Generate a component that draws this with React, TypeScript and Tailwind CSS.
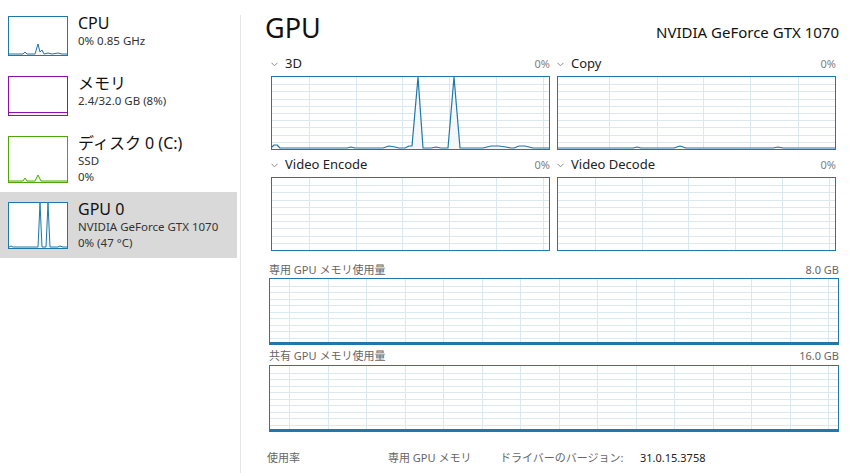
import React from "react";

const FONT = {
  fontFamily: '"Noto Sans", "Noto Sans CJK JP", sans-serif',
};

type Pt = [number, number];

const BLUE = "#1f78a8";

function Graph({
  w,
  h,
  colOffsets,
  rows,
  points,
  stroke = BLUE,
  grid = "#dbe8f0",
  fill = "#f3f7fa",
  thickBottom = false,
}: {
  w: number;
  h: number;
  colOffsets: number[];
  rows: number;
  points?: Pt[];
  stroke?: string;
  grid?: string;
  fill?: string;
  thickBottom?: boolean;
}) {
  const rowH = (h - 2) / rows;
  const ptsStr = points ? points.map((p) => p.join(",")).join(" ") : "";
  const areaStr = points
    ? `${points[0][0]},${h - 1} ` + ptsStr + ` ${points[points.length - 1][0]},${h - 1}`
    : "";
  return (
    <svg width={w} height={h} className="block">
      <rect x={0} y={0} width={w} height={h} fill="#ffffff" />
      {Array.from({ length: rows - 1 }).map((_, i) => (
        <line
          key={"h" + i}
          x1={1}
          x2={w - 1}
          y1={Math.round(1 + rowH * (i + 1)) + 0.5}
          y2={Math.round(1 + rowH * (i + 1)) + 0.5}
          stroke={grid}
          strokeWidth={1}
        />
      ))}
      {colOffsets.map((x, i) => (
        <line
          key={"v" + i}
          x1={x + 0.5}
          x2={x + 0.5}
          y1={1}
          y2={h - 1}
          stroke={grid}
          strokeWidth={1}
        />
      ))}
      {points && <polygon points={areaStr} fill={fill} />}
      {points && (
        <polyline points={ptsStr} fill="none" stroke={stroke} strokeWidth={1.2} strokeLinejoin="round" />
      )}
      {thickBottom && <line x1={0} x2={w} y1={h - 2} y2={h - 2} stroke={stroke} strokeWidth={2} />}
      <rect x={0.5} y={0.5} width={w - 1} height={h - 1} fill="none" stroke={stroke} strokeWidth={1} />
    </svg>
  );
}

function Thumb({
  w,
  h,
  color,
  fill,
  points,
  band,
}: {
  w: number;
  h: number;
  color: string;
  fill: string;
  points?: Pt[];
  band?: number;
}) {
  const ptsStr = points ? points.map((p) => p.join(",")).join(" ") : "";
  const areaStr = points
    ? `${points[0][0]},${h - 1} ` + ptsStr + ` ${points[points.length - 1][0]},${h - 1}`
    : "";
  return (
    <svg width={w} height={h} className="block shrink-0">
      <rect x={0} y={0} width={w} height={h} fill="#ffffff" />
      {band && <rect x={1} y={h - 1 - band} width={w - 2} height={band} fill={fill} />}
      {band && <line x1={1} x2={w - 1} y1={h - 1 - band + 0.5} y2={h - 1 - band + 0.5} stroke={color} strokeWidth={1} />}
      {points && <polygon points={areaStr} fill={fill} />}
      {points && <polyline points={ptsStr} fill="none" stroke={color} strokeWidth={1} />}
      <rect x={0.5} y={0.5} width={w - 1} height={h - 1} fill="none" stroke={color} strokeWidth={1} />
    </svg>
  );
}

function Chevron() {
  return (
    <svg width="7" height="5" viewBox="0 0 7 5" className="mr-[7px] mt-[1px]">
      <polyline points="0.5,0.8 3.5,3.8 6.5,0.8" fill="none" stroke="#8a8a8a" strokeWidth="1" />
    </svg>
  );
}

const cols47 = [38, 85, 131, 178, 225, 272];
const colsMem = [20, 59, 97, 136, 174, 213, 251, 290, 328, 367, 405, 444, 482, 521, 559];

const p3d: Pt[] = [
  [1, 71], [3, 69], [6, 69], [9, 72], [76, 72], [80, 71], [84, 72], [112, 72], [118, 70],
  [124, 71], [128, 72], [134, 72], [138, 70], [141, 70], [147, 1], [152, 72], [160, 72],
  [165, 71], [170, 72], [177, 72], [183, 1], [189, 72], [212, 72], [220, 70], [228, 70],
  [235, 71], [240, 72], [243, 72], [248, 70], [254, 70], [262, 72], [278, 72],
];

const pCopy: Pt[] = [
  [1, 72], [76, 72], [80, 71], [84, 72], [117, 72], [123, 70], [129, 72], [216, 72],
  [221, 71], [226, 72], [278, 72],
];

const pCpu: Pt[] = [
  [1, 38], [15, 38], [17, 36], [19, 38], [27, 38], [30, 28], [32, 36], [34, 34], [36, 38],
  [40, 37], [44, 38], [50, 37], [54, 38], [59, 38],
];

const pDisk: Pt[] = [
  [1, 45], [15, 45], [17, 42], [19, 45], [27, 45], [30, 39], [33, 45], [59, 45],
];

const pGpu: Pt[] = [
  [1, 45], [3, 44], [5, 45], [30, 45], [32, 1], [34, 45], [38, 45], [40, 1], [42, 45],
  [50, 45], [52, 44], [55, 45], [59, 45],
];

function SideItem({
  thumb,
  title,
  lines,
  selected,
  h,
}: {
  thumb: React.ReactNode;
  title: string;
  lines: string[];
  selected?: boolean;
  h: string;
}) {
  return (
    <div className={`flex pl-[8px] pt-[10px] ${h} ${selected ? "bg-[#d9d9d9]" : ""}`}>
      {thumb}
      <div className="ml-[10px] flex flex-col">
        <div className="text-[16px] leading-[18px] text-[#111] mt-[-2px]">{title}</div>
        {lines.map((l, i) => (
          <div key={i} className="text-[11.5px] leading-[15px] text-[#333] mt-[1px]">
            {l}
          </div>
        ))}
      </div>
    </div>
  );
}

export default function App() {
  return (
    <div className="w-[852px] h-[473px] flex bg-white overflow-hidden" style={FONT}>
      {/* sidebar */}
      <div className="w-[240px] shrink-0 flex flex-col pt-[6px] pr-[3px]">
        <SideItem
          h="h-[60px]"
          thumb={<Thumb w={60} h={40} color={BLUE} fill="#f1f6fa" points={pCpu} />}
          title="CPU"
          lines={["0%  0.85 GHz"]}
        />
        <SideItem
          h="h-[60px]"
          thumb={<Thumb w={60} h={40} color="#8b12ae" fill="#f4f2f4" band={3} />}
          title="メモリ"
          lines={["2.4/32.0 GB (8%)"]}
        />
        <SideItem
          h="h-[66px]"
          thumb={<Thumb w={60} h={47} color="#4da60c" fill="#eff7e8" points={pDisk} />}
          title="ディスク 0 (C:)"
          lines={["SSD", "0%"]}
        />
        <SideItem
          h="h-[66px]"
          selected
          thumb={<Thumb w={60} h={47} color={BLUE} fill="#f1f6fa" points={pGpu} />}
          title="GPU 0"
          lines={["NVIDIA GeForce GTX 1070", "0%  (47 °C)"]}
        />
      </div>
      <div className="w-px bg-[#e6e6e6] mt-[15px] shrink-0" />

      {/* main */}
      <div className="flex-1 flex flex-col pl-[24px] pr-[14px] pt-[12px]">
        <div className="flex items-baseline justify-between h-[32px]">
          <div className="text-[27px] leading-[32px] text-[#111]">GPU</div>
          <div className="text-[15px] text-[#111]">NVIDIA GeForce GTX 1070</div>
        </div>

        <div className="ml-[6px] mt-[10px] grid grid-cols-[279px_279px] gap-x-[7px]">
          <div>
            <div className="h-[20px] flex items-center justify-between">
              <div className="flex items-center text-[13px] text-[#222]">
                <Chevron />
                3D
              </div>
              <div className="text-[11px] text-[#808080]">0%</div>
            </div>
            <div className="mt-[2px]">
              <Graph w={279} h={74} colOffsets={cols47} rows={10} points={p3d} />
            </div>
          </div>
          <div>
            <div className="h-[20px] flex items-center justify-between">
              <div className="flex items-center text-[13px] text-[#222]">
                <Chevron />
                Copy
              </div>
              <div className="text-[11px] text-[#808080]">0%</div>
            </div>
            <div className="mt-[2px]">
              <Graph w={279} h={74} colOffsets={[52, 100, 146, 193, 241]} rows={10} points={pCopy} />
            </div>
          </div>
          <div className="mt-[5px]">
            <div className="h-[20px] flex items-center justify-between">
              <div className="flex items-center text-[13px] text-[#222]">
                <Chevron />
                Video Encode
              </div>
              <div className="text-[11px] text-[#808080]">0%</div>
            </div>
            <div className="mt-[2px]">
              <Graph w={279} h={74} colOffsets={cols47} rows={10} />
            </div>
          </div>
          <div className="mt-[5px]">
            <div className="h-[20px] flex items-center justify-between">
              <div className="flex items-center text-[13px] text-[#222]">
                <Chevron />
                Video Decode
              </div>
              <div className="text-[11px] text-[#808080]">0%</div>
            </div>
            <div className="mt-[2px]">
              <Graph w={279} h={74} colOffsets={cols47} rows={10} />
            </div>
          </div>
        </div>

        <div className="ml-[4px] mt-[12px] w-[570px]">
          <div className="h-[14px] flex items-center justify-between text-[11px] text-[#666]">
            <span>専用 GPU メモリ使用量</span>
            <span>8.0 GB</span>
          </div>
          <div className="mt-[1px]">
            <Graph w={570} h={67} colOffsets={colsMem} rows={10} thickBottom />
          </div>
          <div className="mt-[4px] h-[14px] flex items-center justify-between text-[11px] text-[#666]">
            <span>共有 GPU メモリ使用量</span>
            <span>16.0 GB</span>
          </div>
          <div className="mt-[2px]">
            <Graph w={570} h={67} colOffsets={colsMem} rows={10} thickBottom />
          </div>
        </div>

        <div className="mt-[19px] ml-[2px] flex items-center h-[14px] text-[11px] text-[#666]">
          <span className="w-[121px]">使用率</span>
          <span className="w-[112px]">専用 GPU メモリ</span>
          <span className="w-[140px]">ドライバーのバージョン:</span>
          <span className="text-[#222]">31.0.15.3758</span>
        </div>
      </div>
    </div>
  );
}
